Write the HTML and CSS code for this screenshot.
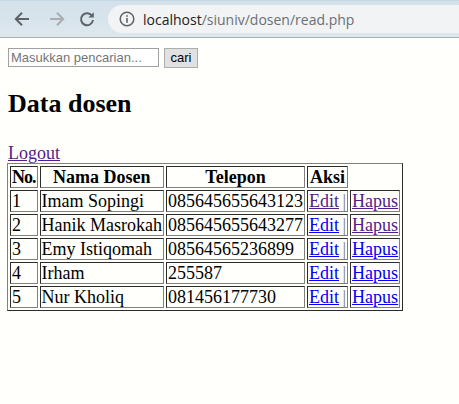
FILE: index.html
```html
<!DOCTYPE html>
<html>
<head>
<meta charset="utf-8">
<title>Data dosen</title>
<link rel="stylesheet" href="styles.css">
</head>
<body>
<div class="chrome">
  <div class="nav">
    <svg class="ico back" width="20" height="20" viewBox="0 0 20 20"><path d="M17 10H4.5M10 3.8L3.8 10L10 16.2" fill="none" stroke="#5f6368" stroke-width="2"/></svg>
    <svg class="ico fwd" width="20" height="20" viewBox="0 0 20 20"><path d="M3 10H15.5M10 3.8L16.2 10L10 16.2" fill="none" stroke="#a9adb1" stroke-width="2"/></svg>
    <svg class="ico" width="20" height="20" viewBox="0 0 20 20"><path d="M15.2 7.2A6 6 0 1 0 16 11" fill="none" stroke="#5f6368" stroke-width="2"/><path d="M16.8 3.2V8.6H11.4Z" fill="#5f6368"/></svg>
  </div>
  <div class="omnibox">
    <svg class="info" width="16" height="16" viewBox="0 0 16 16"><circle cx="8" cy="8" r="6.8" fill="none" stroke="#5f6368" stroke-width="1.5"/><rect x="7.2" y="7" width="1.6" height="4.8" fill="#5f6368"/><rect x="7.2" y="4.2" width="1.6" height="1.6" fill="#5f6368"/></svg>
    <span class="host">localhost</span><span class="path">/siuniv/dosen/read.php</span>
  </div>
</div>
<div class="page">
  <form class="search">
    <input type="text" class="search-input" placeholder="Masukkan pencarian..."> <button type="button" class="search-btn">cari</button>
  </form>
  <h1 class="title">Data dosen</h1>
  <a href="#" class="visited">Logout</a>
  <table class="grid">
    <tr><th class="no">No.</th><th>Nama Dosen</th><th>Telepon</th><th>Aksi</th></tr>
    <tr><td>1</td><td>Imam Sopingi</td><td>085645655643123</td><td class="act"><a href="#" class="visited">Edit</a> <span class="sep">|</span></td><td><a href="#" class="visited">Hapus</a></td></tr>
    <tr><td>2</td><td>Hanik Masrokah</td><td>085645655643277</td><td class="act"><a href="#">Edit</a> <span class="sep">|</span></td><td><a href="#" class="visited">Hapus</a></td></tr>
    <tr><td>3</td><td>Emy Istiqomah</td><td>08564565236899</td><td class="act"><a href="#">Edit</a> <span class="sep">|</span></td><td><a href="#">Hapus</a></td></tr>
    <tr><td>4</td><td>Irham</td><td>255587</td><td class="act"><a href="#">Edit</a> <span class="sep">|</span></td><td><a href="#">Hapus</a></td></tr>
    <tr><td>5</td><td>Nur Kholiq</td><td>081456177730</td><td class="act"><a href="#">Edit</a> <span class="sep">|</span></td><td><a href="#">Hapus</a></td></tr>
  </table>
</div>
</body>
</html>
```
FILE: styles.css
```css
html, body {
  margin: 0;
  padding: 0;
  background: #fffffb;
}
.chrome {
  height: 38px;
  box-sizing: border-box;
  background: linear-gradient(#d3e1ea, #dde7ee);
  border-top: 1px solid #c4d8e6;
  border-bottom: 1px solid #a9b1b7;
  display: flex;
  align-items: center;
}
.nav {
  display: flex;
  align-items: center;
  padding-left: 12px;
}
.back { margin-right: 15px; }
.fwd { margin-right: 10px; }
.omnibox {
  margin-left: 11px;
  flex: 1;
  height: 28px;
  background: #f1f3f4;
  border-radius: 14px 0 0 14px;
  display: flex;
  align-items: center;
  padding-left: 11px;
  font-family: "Open Sans", "Liberation Sans", sans-serif;
  font-size: 14px;
}
.info { margin-right: 8px; }
.host { color: #202124; }
.path { color: #6b7075; }
.page {
  padding: 8px;
  font-family: "Liberation Serif", "Times New Roman", serif;
  font-size: 18px;
  color: #000;
}
.search { margin: 0; }
.search-input {
  font-family: "Liberation Sans", Arial, sans-serif;
  font-size: 13px;
  width: 151px;
  height: 19px;
  box-sizing: border-box;
  border: 1px solid #a0a0a0;
  padding: 1px 2px;
  margin: 0;
  background: #fff;
}
.search-input::placeholder { color: #757575; }
.search-btn {
  font-family: "Liberation Sans", Arial, sans-serif;
  font-size: 13px;
  height: 20px;
  padding: 1px 6px;
  margin: 0;
  border: 1px solid #adadad;
  background: #e1e1e1;
  color: #000;
}
.title {
  font-size: 26px;
  font-weight: bold;
  margin: 21px 0 24px;
}
a { color: #0000ee; }
a.visited { color: #551a8b; }
.grid {
  border: 1px outset #808080;
  border-spacing: 2px;
  line-height: 18px;
  margin-top: -1px;
  margin-left: -1px;
}
.grid th, .grid td {
  border: 1px inset #808080;
  padding: 1px;
  white-space: nowrap;
}
.grid th.no { letter-spacing: -1px; }
.grid td.act { word-spacing: -1px; }
.grid .sep { color: #777; }
.grid td { text-align: left; }
```
